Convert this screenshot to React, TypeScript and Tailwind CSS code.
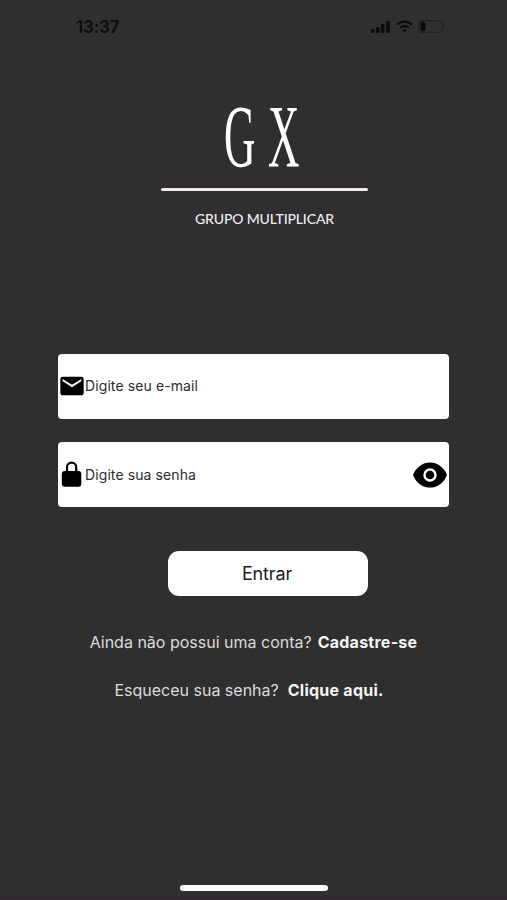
import { MdEmail } from "react-icons/md";

function StatusBar() {
  return (
    <div className="flex h-[54px] items-center justify-between pl-[76px] pr-[61px] text-[#0c0c0c]">
      <span className="text-[17px] font-semibold leading-none tracking-[-0.1px]">13:37</span>
      <div className="flex items-center">
        <svg width="20" height="13" viewBox="0 0 20 13" fill="currentColor">
          <rect x="1" y="8" width="3.6" height="4" rx="1" />
          <rect x="6" y="6" width="3.6" height="6" rx="1" />
          <rect x="11" y="3" width="3.6" height="9" rx="1" />
          <rect x="16.2" y="0" width="3.6" height="12" rx="1" />
        </svg>
        <svg className="mb-[2px] ml-[6px]" width="17" height="13" viewBox="0 0 18 13" fill="none" stroke="currentColor" strokeWidth="2.4">
          <path d="M1.2 4.6a11.2 11.2 0 0 1 15.6 0" />
          <path d="M4.3 7.9a6.8 6.8 0 0 1 9.4 0" />
          <path d="M9 12.6 6.6 10.2a3.5 3.5 0 0 1 4.8 0z" fill="currentColor" stroke="none" />
        </svg>
        <svg className="mb-[2px] ml-[5px]" width="28" height="13" viewBox="0 0 28 13">
          <rect x="1" y="0.7" width="23.5" height="11.6" rx="3.4" fill="none" stroke="#222222" strokeWidth="1.2" />
          <path d="M26 4.4c1.3.4 1.3 3.8 0 4.2z" fill="#1c1c1c" />
          <rect x="2.6" y="2.2" width="5" height="8.6" rx="1.8" fill="#080808" />
        </svg>
      </div>
    </div>
  );
}

function Logo() {
  return (
    <div className="mx-auto mt-[42px] flex h-[210px] w-[327px] translate-x-[7px] flex-col items-center bg-[#302e31] pl-2 text-white">
      <svg className="-mt-[10px] mr-[5px] shrink-0" width="90" height="102" viewBox="0 0 90 102" fill="currentColor">
        <g transform="translate(8 79.6) scale(1 2.04)">
          <text x="-1" y="0" fontSize="43.6" fontFamily="'Liberation Serif', serif">G</text>
          <text x="43" y="0" fontSize="43.6" fontFamily="'Liberation Serif', serif">X</text>
        </g>
      </svg>
      <div className="h-[3px] w-[207px] shrink-0 rounded-full bg-[#eeeaee]" />
      <p className="mt-[18px] whitespace-nowrap font-['Lato',sans-serif] text-[14px] font-medium leading-5 tracking-[-0.15px] text-[#efedef]">
        GRUPO MULTIPLICAR
      </p>
    </div>
  );
}

function LockIcon() {
  return (
    <svg className="mb-px" width="27" height="28" viewBox="0 0 27 28">
      <path d="M9 13V7.2a4.6 4.6 0 0 1 9.2 0V13" fill="none" stroke="#000" strokeWidth="2.3" />
      <rect x="3.8" y="11" width="19.5" height="15.8" rx="3" fill="#000" />
    </svg>
  );
}

function EyeIcon() {
  return (
    <svg width="34" height="26" viewBox="0 0 34 26">
      <path d="M17 .4C9.6.4 3 5.2 0 13c3 7.8 9.6 12.6 17 12.6S31 20.8 34 13C31 5.2 24.4.4 17 .4z" fill="#000" />
      <circle cx="17" cy="13" r="5.5" fill="none" stroke="#fff" strokeWidth="2.4" />
    </svg>
  );
}

export default function App() {
  return (
    <main className="flex h-[900px] w-[507px] flex-col overflow-hidden border-b border-[#392c34] bg-[#2f2f2f] font-['Inter',sans-serif]">
      <StatusBar />
      <Logo />

      <form className="mt-[47.6px] flex flex-col items-center">
        <div className="flex w-[391px] flex-col gap-[23.6px]">
          <label className="flex h-[65px] items-center rounded bg-white">
            <MdEmail className="-mr-px" size={28} color="#000" />
            <span className="mb-px text-[14px] tracking-[0.1px] text-[#2c2c2c]">Digite seu e-mail</span>
          </label>
          <label className="flex h-[65px] items-center rounded bg-white pr-[2px]">
            <LockIcon />
            <span className="mb-px flex-1 text-[14px] tracking-[0.1px] text-[#2c2c2c]">Digite sua senha</span>
            <EyeIcon />
          </label>
        </div>
        <button type="button" className="mt-11 ml-7 h-[45px] w-[200px] rounded-[11px] bg-white pr-px pb-px text-[18px] tracking-[-0.15px] text-[#1c1c1c]">
          Entrar
        </button>
      </form>

      <p className="mt-[34px] flex justify-center gap-[6px] whitespace-nowrap text-[16px] leading-6 text-[#dcdcdc]">
        <span>Ainda não possui uma conta?</span>
        <a className="font-bold tracking-[0.25px] text-[#f4f4f4]">Cadastre-se</a>
      </p>
      <p className="mt-6 mr-[9px] flex justify-center gap-[9px] whitespace-nowrap text-[16px] leading-6 text-[#dcdcdc]">
        <span>Esqueceu sua senha?</span>
        <a className="font-bold tracking-[0.25px] text-[#f4f4f4]">Clique aqui.</a>
      </p>

      <div className="mx-auto mt-auto mb-[8px] h-[6px] w-[148px] rounded-full bg-white" />
    </main>
  );
}
